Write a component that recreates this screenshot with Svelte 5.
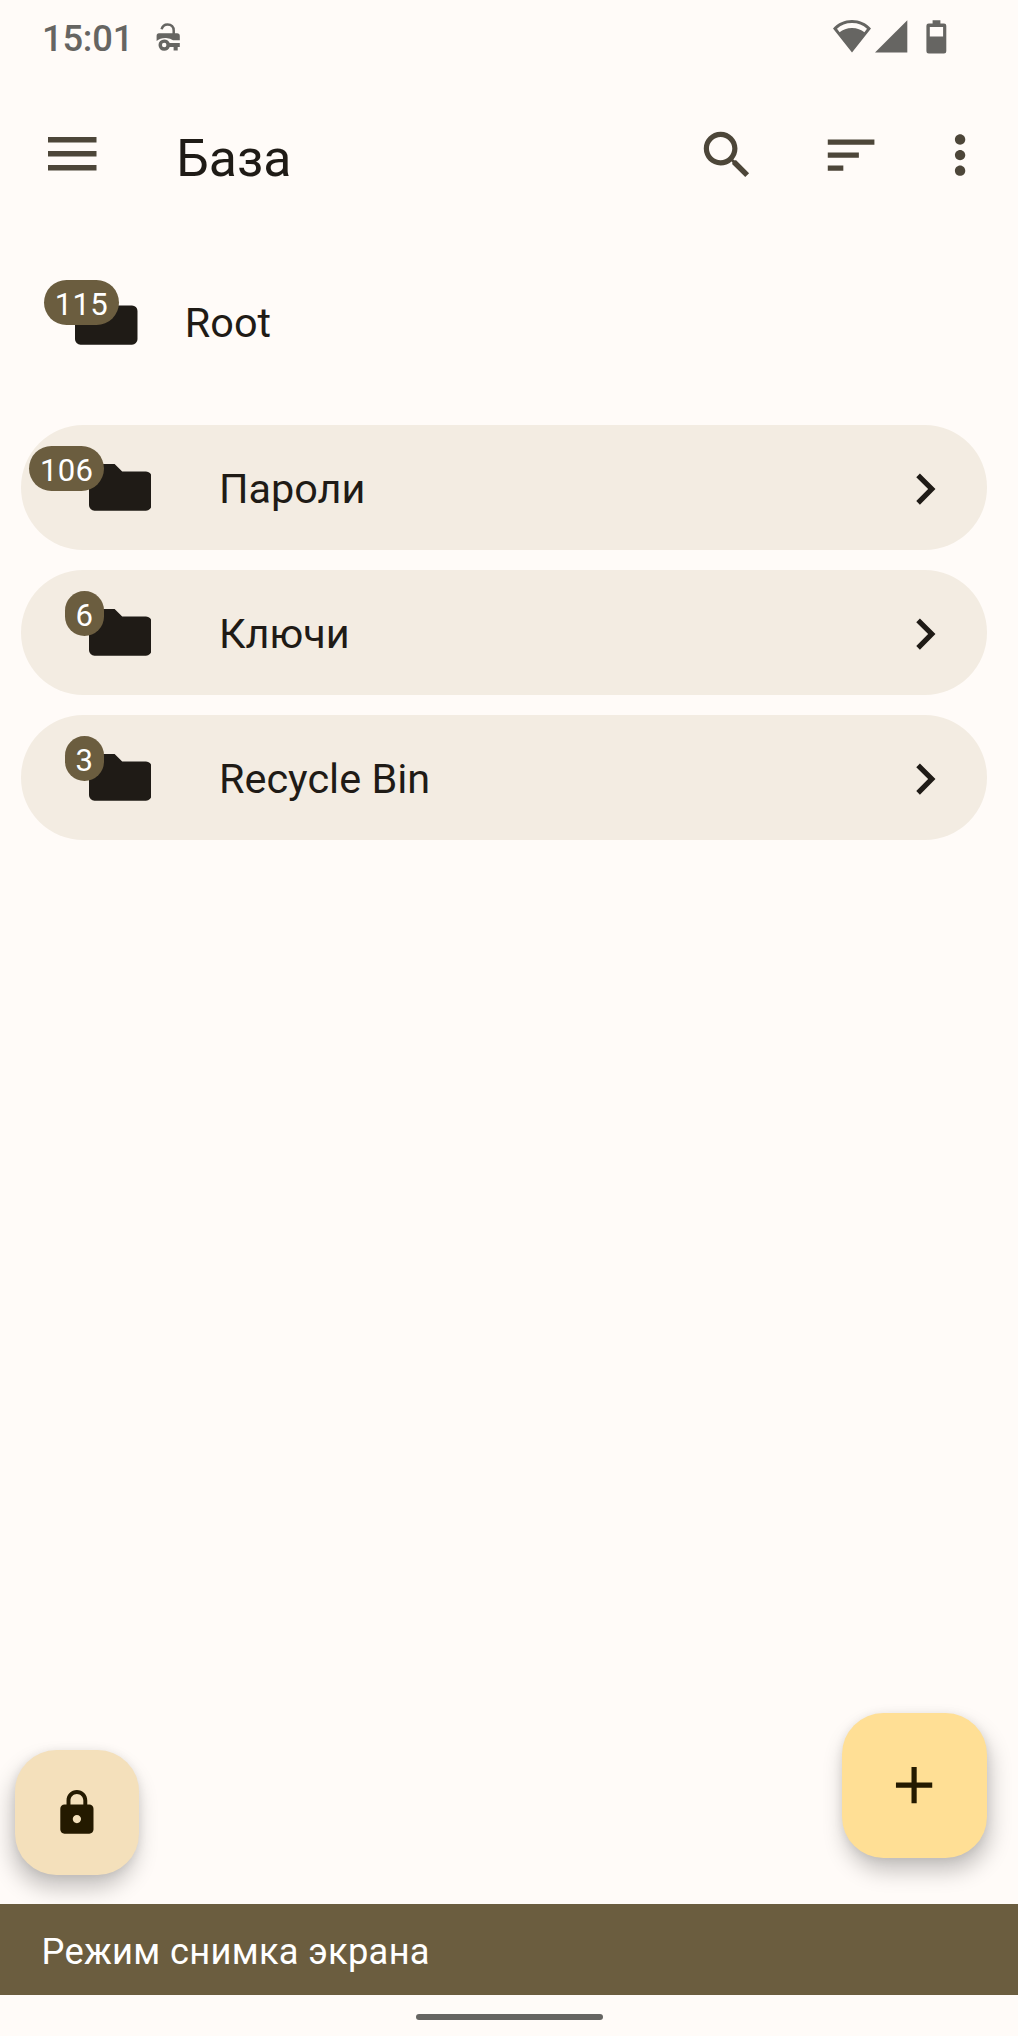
<script>
  const root = { name: 'Root', count: 115 };
  const groups = [
    { name: 'Пароли', count: 106 },
    { name: 'Ключи', count: 6 },
    { name: 'Recycle Bin', count: 3 }
  ];
</script>

{#snippet folder(count)}
  <svg class="folder" viewBox="0 0 62.5 46.7">
    <path d="M5.5 0H25.6L33.2 7.4H57A5.5 5.5 0 0 1 62.5 12.9V41.2A5.5 5.5 0 0 1 57 46.7H5.5A5.5 5.5 0 0 1 0 41.2V5.5A5.5 5.5 0 0 1 5.5 0Z" />
  </svg>
  <span class="badge">{count}</span>
{/snippet}

<div class="screen">
  <div class="status">
    <span class="time">15:01</span>
    <svg class="key" width="24" height="28" viewBox="0 0 24 28">
      <path d="M5.6 6.2C6.4 3 8.6 1.4 11.6 1.4C15.5 1.4 17.7 4 17.7 7.4V11" fill="none" stroke="currentColor" stroke-width="2.5" />
      <path d="M3 10.2H21Q23.8 10.2 23.8 13V17.2H17Q14.6 15.1 10 14.9Q4.4 14.6 .6 18V13Q.6 10.2 3 10.2Z" />
      <path fill-rule="evenodd" d="M8.2 16.4C11 16.4 13 18 13.7 20H23.8V24H21.7V27.6H17.6V24H13.7C13 26.2 11 27.8 8.2 27.8A5.7 5.7 0 0 1 8.2 16.4ZM8.2 19.8A2.2 2.2 0 1 0 8.2 24.3A2.2 2.2 0 0 0 8.2 19.8Z" />
    </svg>
    <svg class="wifi" width="38" height="33" viewBox="0 0 38 33">
      <path fill-rule="evenodd" d="M19 0C26.4 0 33 3 38 8.4L19 32.4L0 8.4C5 3 11.6 0 19 0ZM19 3C13 3 7.8 5 4 8.8L6.6 12.3C9.8 9.6 14 8 19 8S28.2 9.6 31.4 12.3L34 8.8C30.2 5 25 3 19 3Z" />
    </svg>
    <svg class="signal" width="33" height="33" viewBox="0 0 33 33"><path d="M32.3 .3V32.4H0Z" /></svg>
    <svg class="battery" width="21" height="34" viewBox="0 0 21 34">
      <path fill-rule="evenodd" d="M6.6 .2H14.4V3.4H18Q20.3 3.4 20.3 5.7V31.2Q20.3 33.5 18 33.5H2.7Q.4 33.5 .4 31.2V5.7Q.4 3.4 2.7 3.4H6.6ZM3.8 7V16.5H17.1V7Z" />
    </svg>
  </div>

  <header class="toolbar">
    <svg class="menu" width="49" height="34" viewBox="0 0 49 34"><path d="M0 0H48.5V5.6H0ZM0 14H48.5V19.6H0ZM0 27.9H48.5V33.5H0Z" /></svg>
    <h1>База</h1>
    <svg class="action" viewBox="0 0 24 24"><path d="M15.5 14h-.79l-.28-.27C15.41 12.59 16 11.11 16 9.5 16 5.91 13.09 3 9.5 3S3 5.91 3 9.5 5.91 16 9.5 16c1.61 0 3.09-.59 4.23-1.57l.27.28v.79l5 4.99L20.49 19l-4.99-5zm-6 0C7.01 14 5 11.99 5 9.5S7.01 5 9.5 5 14 7.01 14 9.5 11.99 14 9.5 14z" /></svg>
    <svg class="action sort" viewBox="0 0 24 24"><path d="M3 18h6v-2H3v2zM3 6v2h18V6H3zm0 7h12v-2H3v2z" /></svg>
    <svg class="action more" viewBox="0 0 24 24"><path d="M12 8c1.1 0 2-.9 2-2s-.9-2-2-2-2 .9-2 2 .9 2 2 2zm0 2c-1.1 0-2 .9-2 2s.9 2 2 2 2-.9 2-2-.9-2-2-2zm0 6c-1.1 0-2 .9-2 2s.9 2 2 2 2-.9 2-2-.9-2-2-2z" /></svg>
  </header>

  <main>
    <div class="root">
      <div class="icon">{@render folder(root.count)}</div>
      <span class="name">{root.name}</span>
    </div>
    <div class="list">
      {#each groups as group}
        <div class="row">
          <div class="icon">{@render folder(group.count)}</div>
          <span class="name">{group.name}</span>
          <svg class="chevron" viewBox="0 0 24 24"><path d="M10 6L8.59 7.41 13.17 12l-4.58 4.59L10 18l6-6z" /></svg>
        </div>
      {/each}
    </div>
  </main>

  <div class="fabs">
    <button class="fab lock" aria-label="Lock">
      <svg width="49.8" height="49.8" viewBox="0 0 24 24"><path d="M18 8h-1V6c0-2.76-2.24-5-5-5S7 3.24 7 6v2H6c-1.1 0-2 .9-2 2v10c0 1.1.9 2 2 2h12c1.1 0 2-.9 2-2V10c0-1.1-.9-2-2-2zm-6 9c-1.1 0-2-.9-2-2s.9-2 2-2 2 .9 2 2-.9 2-2 2zm3.1-9H8.9V6c0-1.71 1.39-3.1 3.1-3.1 1.71 0 3.1 1.39 3.1 3.1v2z" /></svg>
    </button>
    <button class="fab add" aria-label="Add">
      <svg width="62.2" height="62.2" viewBox="0 0 24 24"><path d="M19 13h-6v6h-2v-6H5v-2h6V5h2v6h6z" /></svg>
    </button>
  </div>

  <div class="banner"><span>Режим снимка экрана</span></div>
  <div class="nav"><i></i></div>
</div>

<style>
  :global(body) { background: #fffbf8; }
  .screen {
    width: 1018px;
    height: 2036px;
    display: flex;
    flex-direction: column;
    overflow: hidden;
    background: #fffbf8;
    color: #1f1b16;
    font-family: Roboto, sans-serif;
  }
  svg { display: block; flex: none; fill: currentColor; }

  .status {
    height: 104px;
    display: flex;
    align-items: flex-start;
    padding-left: 42px;
    box-sizing: border-box;
    color: #666562;
  }
  .time { width: 114px; margin-top: 18px; font-size: 36.3px; line-height: 42px; font-weight: 500; letter-spacing: -0.2px; }
  .key { margin-top: 23px; }
  .wifi { margin: 20px 0 0 652.5px; }
  .signal { margin: 20px 0 0 4px; }
  .battery { margin: 20px 0 0 18px; }

  .toolbar { height: 104px; display: flex; align-items: center; padding-left: 48.4px; color: #4d4639; }
  .menu { margin-bottom: 4px; }
  h1 { margin: 6px 0 0; padding-left: 78.8px; flex: 1; color: #1f1b16; font-size: 51.8px; line-height: 60px; font-weight: 400; }
  .action { width: 62.2px; height: 62.2px; margin-bottom: 1px; }
  .sort { margin-left: 62px; }
  .more { margin: 0 26.5px 1px 47.3px; }

  main { flex: 1; }
  .root { height: 217px; display: flex; align-items: flex-start; padding: 90px 0 0 75.3px; box-sizing: border-box; }
  .icon { position: relative; width: 62.5px; height: 46.7px; flex: none; }
  .folder { width: 62.5px; height: 46.7px; }
  .badge {
    position: absolute;
    top: -18px;
    right: 47.2px;
    height: 45px;
    min-width: 38.8px;
    padding: 0 10.7px;
    box-sizing: border-box;
    border-radius: 22.5px;
    background: #6b5d3f;
    color: #fff;
    font-size: 31.1px;
    line-height: 49px;
    letter-spacing: 0.2px;
    text-align: center;
  }
  .root .badge { right: 19.3px; }
  .name { font-size: 41.4px; line-height: 48px; }
  .root .name { margin: 1px 0 0 47px; }

  .list { display: flex; flex-direction: column; gap: 20.7px; padding: 0 31px 0 21px; }
  .row {
    height: 124.5px;
    display: flex;
    align-items: center;
    border-radius: 62.2px;
    background: #f3ece2;
    padding: 0 31.2px 0 67.5px;
    box-sizing: border-box;
  }
  .row .name { flex: 1; padding-left: 68px; margin-top: 3.4px; }
  .chevron { width: 62.2px; height: 62.2px; margin-top: 3px; }

  .fabs { display: flex; justify-content: space-between; align-items: flex-end; padding: 0 31px 29.3px 15px; }
  .fab {
    display: flex;
    align-items: center;
    justify-content: center;
    padding: 0;
    border: 0;
    border-radius: 41.4px;
    color: #241a00;
  }
  .lock { width: 124.4px; height: 124.4px; background: #f4e0bb; box-shadow: -3px 13px 22px rgb(0 0 0 / 0.23), 0 1px 10px rgb(0 0 0 / 0.08); }
  .add { width: 145.2px; height: 145.2px; margin-bottom: 16.6px; background: #ffdf95; box-shadow: 3px 13px 22px rgb(0 0 0 / 0.23), 0 1px 10px rgb(0 0 0 / 0.08); }

  .banner { position: relative; height: 90.5px; display: flex; align-items: center; padding: 5px 0 0 41.5px; box-sizing: border-box; background: #6b5d3f; color: #fff; font-size: 36.3px; letter-spacing: 0.3px; }
  .nav { height: 41.5px; display: flex; justify-content: center; align-items: center; }
  .nav i { width: 187px; height: 6px; margin-top: 4px; border-radius: 3px; background: #666562; }
</style>
